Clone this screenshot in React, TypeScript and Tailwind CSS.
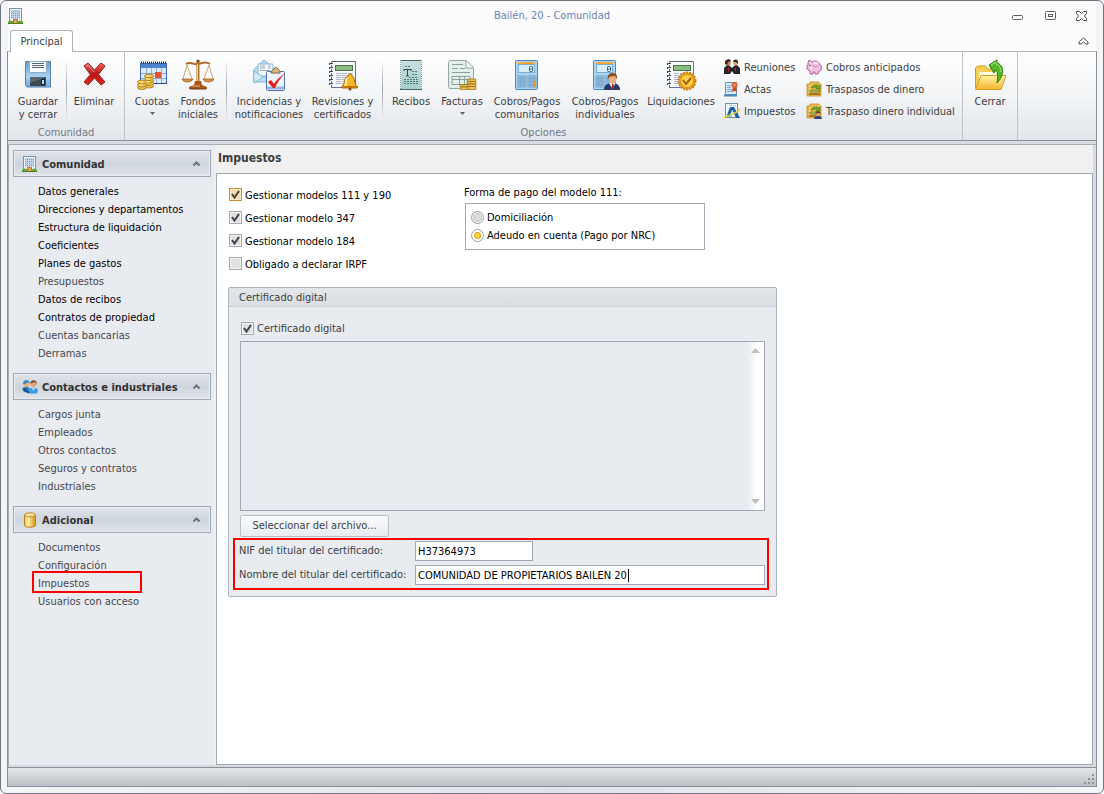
import React, { useState } from 'react';
import { clsx } from 'clsx';

/* ---------- icons ---------- */

const BuildingIcon = () => (
  <svg width="16" height="16" viewBox="0 0 16 16">
    <rect x="1.500" y="0.5" width="12" height="13" fill="#eef5fc" stroke="#7c93ad" />
    <rect x="3" y="2" width="9" height="9" fill="#c3d3e8" />
    <path d="M3 3.500h9M3 5.500h9M3 7.500h9M3 9.500h9" stroke="#7e9ac0" strokeDasharray="1 1" />
    <path d="M5 11h5v4H5z" fill="#c97a2b" />
    <path d="M6.500 12h2v3h-2z" fill="#f3b057" />
    <path d="M0 14c1-2 4-2 5 0v1.500H0zM10 14c1-2 4-2 5 0v1.500h-5z" fill="#6fa62e" />
    <path d="M0 15.500h15" stroke="#4b7d22" />
  </svg>
);

const PeopleIcon = () => (
  <svg width="16" height="16" viewBox="0 0 16 16">
    <circle cx="4.500" cy="5" r="3" fill="#e8ab7c" />
    <path d="M1 5c0-5 6-5 7-1L5 3.500 3 5z" fill="#2f8dcd" />
    <path d="M0 10c2-3 6-3 8 0l-1 4-5-1z" fill="#2778b8" />
    <circle cx="11.500" cy="5" r="3" fill="#e2a274" />
    <path d="M8.500 5c-1-5 7-5 6.500 0l-1.500-2-4 1z" fill="#7a4a2a" />
    <path d="M6 11c3-3 8-3 10 0l-1 3.500H7z" fill="#3b9be0" />
    <path d="M10 9.500l1.500 2 1.500-2" fill="#fff" />
    <path d="M2 10l5 4" stroke="#123d70" strokeWidth="1.500" />
  </svg>
);

const CylinderIcon = () => (
  <svg width="16" height="16" viewBox="0 0 16 16">
    <defs>
      <linearGradient id="gold">
        <stop offset="0" stopColor="#f7c84a" />
        <stop offset=".35" stopColor="#fff0a8" />
        <stop offset="1" stopColor="#d98f10" />
      </linearGradient>
    </defs>
    <path d="M2.500 3v10c0 3 11 3 11 0V3" fill="url(#gold)" stroke="#b47d1d" />
    <ellipse cx="8" cy="2.800" rx="5.500" ry="2" fill="#fbe59a" stroke="#b98b34" />
  </svg>
);

const SaveIcon = () => (
  <svg width="32" height="32" viewBox="0 0 32 32">
    <defs>
      <linearGradient id="disk" x1="0" y1="0" x2="0" y2="1">
        <stop offset="0" stopColor="#6b9fcb" />
        <stop offset=".6" stopColor="#a8d3f3" />
        <stop offset="1" stopColor="#6cabdf" />
      </linearGradient>
    </defs>
    <path d="M3.500 2.500h25v25.500h-23.500l-1.500-2z" fill="url(#disk)" stroke="#5583b0" />
    <rect x="7.500" y="2.500" width="17" height="11" fill="#f8fbff" stroke="#8eaecd" />
    <path d="M10 4.500h12M10 6.500h12M10 8.500h12" stroke="#596676" />
    <path d="M8 18h16v9H8z" fill="#3f4650" />
    <path d="M8 18h16l-16 6z" fill="#5c6772" />
    <rect x="19.500" y="20.500" width="3" height="5" fill="#b8dbf5" stroke="#162334" />
  </svg>
);

const DeleteIcon = () => (
  <svg width="32" height="32" viewBox="0 0 32 32">
    <defs>
      <linearGradient id="red" x1="0" y1="0" x2="0" y2="1">
        <stop offset="0" stopColor="#ee6b64" />
        <stop offset=".5" stopColor="#b81515" />
        <stop offset="1" stopColor="#e02a22" />
      </linearGradient>
    </defs>
    <path
      d="M6 7l4-3 6.500 7L23 4l4 3-6.500 8.500L27 23l-4 3-6.500-7L10 26l-4-3 6.500-7.500z"
      fill="url(#red)" stroke="#a01818" strokeLinejoin="round"
    />
    <path d="M8 7.500l2-1.500 6 7" fill="none" stroke="#f4958d" />
  </svg>
);

const QuotaIcon = () => (
  <svg width="32" height="32" viewBox="0 0 32 32">
    <rect x="4.500" y="4.500" width="26" height="20" fill="#dceafb" stroke="#3b67ad" />
    <path d="M5 5h25v4H5z" fill="#4d84d4" />
    <path d="M5 3.500h26" stroke="#25303d" strokeWidth="2" strokeDasharray="1 1" />
    <path d="M5 14.500h25M5 19.500h25M10.500 9v15M15.500 9v15M20.500 9v15M25.500 9v15" stroke="#89aee0" />
    <path d="M5 24.500h26" stroke="#234d91" />
    <rect x="19" y="13" width="6" height="6" fill="#e4512a" />
    <g fill="#f4c54c" stroke="#9c6b14" strokeWidth=".8">
      <ellipse cx="13" cy="27" rx="4.500" ry="2" /><ellipse cx="13" cy="24.500" rx="4.500" ry="2" />
      <ellipse cx="13" cy="22" rx="4.500" ry="2" /><ellipse cx="13" cy="19.500" rx="4.500" ry="2" />
      <ellipse cx="13" cy="17" rx="4.500" ry="2" />
      <ellipse cx="6" cy="28.500" rx="4.500" ry="2" /><ellipse cx="6" cy="26" rx="4.500" ry="2" />
      <ellipse cx="6" cy="23" rx="4.500" ry="2" />
    </g>
    <path d="M10 17h4M10 20h4M10 23h4M3 23h4M3 26h4" stroke="#fff0a6" />
  </svg>
);

const ScalesIcon = () => (
  <svg width="32" height="32" viewBox="0 0 32 32">
    <path d="M4 5c5-3 7 1 12 0s7-3 12 0" fill="none" stroke="#aa6b2b" strokeWidth="2" />
    <path d="M16 1v23" stroke="#b67326" strokeWidth="3" />
    <circle cx="16" cy="2" r="1.500" fill="#8b4a14" />
    <path d="M15.500 5v18" stroke="#f1c66f" />
    <path d="M5 6L1 20M5 6l5 14M27 6l-5 14M27 6l4 14" stroke="#d3a970" fill="none" />
    <path d="M0 20h11c-1 4-10 4-11 0zM21 20h11c-1 4-10 4-11 0z" fill="#d59442" stroke="#96581c" strokeWidth=".7" />
    <path d="M13 22h6l1 4 5 2v2H7v-2l5-2z" fill="#a9581c" />
    <path d="M8 30h16" stroke="#70380e" />
    <path d="M10 27h8" stroke="#eeb064" />
  </svg>
);

const IncidentsIcon = () => (
  <svg width="32" height="32" viewBox="0 0 32 32">
    <path d="M.5 11L11 1l11 9v13H.5z" fill="#b9dff3" stroke="#7ab3d3" />
    <path d="M5 5h15v12H5z" fill="#f5fbff" stroke="#8abbd3" />
    <path d="M7 7h5M7 9h5M15 7h3M15 9h3M7 11.500h10" stroke="#93a9b5" />
    <path d="M.5 12l10 6L1 24zM22 12l-11 6 11 5z" fill="#cdecf9" stroke="#83b9d5" />
    <rect x="13.500" y="12.500" width="18" height="19" rx="1" fill="#eef3ff" stroke="#5672ad" />
    <path d="M14 29h17" stroke="#99b5e4" strokeWidth="3" />
    <path d="M18 13c0-2 2-1 3-3s3-2 4 0c1 2 2 1 2 3v1h-9z" fill="#d9b978" stroke="#74664c" />
    <path d="M15 23l3-2 3 4c3-5 6-7 11-11-4 5-8 9-10 15h-2z" fill="#e51d17" />
  </svg>
);

const Notebook = () => (
  <g>
    <path d="M4.500 2.500h24v26h-24z" fill="#f9fafc" stroke="#596877" />
    <path d="M28.500 3v25.500h-24" fill="none" stroke="#6670a4" />
    <path d="M9 14.500h17M9 16.500h17M9 18.500h17M9 20.500h17M9 22.500h17M9 24.500h17" stroke="#aeb4cf" strokeDasharray="5 1" />
    <rect x="8.500" y="6.500" width="17" height="5" fill="#8fbd86" stroke="#477443" />
    <path d="M2 5h4M2 9h4M2 13h4M2 17h4M2 21h4M2 25h4" stroke="#424b57" strokeWidth="2" />
    <path d="M3 5.500h3M3 9.500h3M3 13.500h3M3 17.500h3M3 21.500h3M3 25.500h3" stroke="#e8ebee" />
  </g>
);

const ReviewsIcon = () => (
  <svg width="32" height="32" viewBox="0 0 32 32">
    <Notebook />
    <path d="M21 17c0-3 4-3 4 0 4 2 1 8 5 10v2H15v-2c4-2 1-8 6-10z" fill="#f6b72b" stroke="#a66b0b" />
    <path d="M20 19c-2 3 0 6-2 8" stroke="#fff0a0" strokeWidth="2" fill="none" />
    <path d="M15 28h16" stroke="#c5740a" strokeWidth="2" />
    <circle cx="23" cy="30" r="1.500" fill="#80430d" />
  </svg>
);

const LiquidationIcon = () => (
  <svg width="32" height="32" viewBox="0 0 32 32">
    <Notebook />
    <circle cx="22" cy="22" r="8.500" fill="#f0a51f" stroke="#ce7f10" strokeWidth="2" strokeDasharray="2 1" />
    <circle cx="22" cy="22" r="6.500" fill="#ffd345" stroke="#d99017" />
    <path d="M18 21l3 4 5-6" fill="none" stroke="#a15c0b" strokeWidth="2" />
  </svg>
);

const ReceiptIcon = () => (
  <svg width="32" height="32" viewBox="0 0 32 32">
    <defs>
      <linearGradient id="receipt" x1="0" y1="0" x2="0" y2="1">
        <stop offset="0" stopColor="#c9dedd" />
        <stop offset="1" stopColor="#a4cfcc" />
      </linearGradient>
    </defs>
    <rect x="6" y="2" width="20" height="28" fill="url(#receipt)" />
    <path d="M5.500 1v30M26.500 1v30" stroke="#7f9c9b" strokeDasharray="1 1" />
    <path d="M6 1.500h20M5 30.500h22" stroke="#486463" />
    <path d="M9 10.500h7M12.500 11v6M11 17h3M9 10v2M16 10v2" stroke="#284e51" />
    <path d="M10 7.500h6M17 12.500h6M17 15.500h6M9 20.500h14M9 22.500h14M9 24.500h14M14 18.500h9" stroke="#55787a" strokeDasharray="2 1" />
  </svg>
);

const InvoicesIcon = () => (
  <svg width="32" height="32" viewBox="0 0 32 32">
    <path d="M3.500 1.500h17l7 7v21h-24l-1-2v-24z" fill="#e4eeeb" stroke="#93a7a3" />
    <path d="M20 2v7h7" fill="#f5faf8" stroke="#93a7a3" />
    <path d="M6 5.500h11M6 9.500h6M14 9.500h5M6 13.500h18M6 17.500h18v8H6zM6 20.500h18M13.500 17v9M18.500 17v9" stroke="#8ca19c" fill="none" />
    <g fill="#eabf4b" stroke="#8e6518" strokeWidth=".7">
      <rect x="21" y="20" width="9" height="2.500" rx="1" /><rect x="21" y="22.500" width="9" height="2.500" rx="1" />
      <rect x="21" y="25" width="9" height="2.500" rx="1" /><rect x="21" y="27.500" width="9" height="3" rx="1" />
      <rect x="14" y="25.500" width="8" height="2.500" rx="1" /><rect x="14" y="28" width="8" height="2.500" rx="1" />
    </g>
  </svg>
);

const Calculator = () => (
  <g>
    <rect x="4.500" y="1.500" width="22" height="29" rx="1" fill="#a9d4f4" stroke="#4c88bd" />
    <path d="M7 3h17v2H7z" fill="#f6a83a" />
    <rect x="7.500" y="5.500" width="16" height="8" fill="#d9eefb" stroke="#7cadd2" />
    <rect x="18.500" y="7.500" width="3" height="5" rx="1" fill="none" stroke="#33536f" />
    <path d="M19 11l2-2" stroke="#33536f" strokeWidth=".7" />
    <g fill="#f6fbff" stroke="#4f86b5" strokeWidth=".7">
      {[17, 20, 23, 26].map((y) => [7, 10, 13, 17, 20, 23].map((x) => <rect key={`${x}-${y}`} x={x} y={y} width="2" height="2" />))}
    </g>
  </g>
);

const CalculatorIcon = () => (
  <svg width="32" height="32" viewBox="0 0 32 32">
    <Calculator />
    <rect x="22.500" y="22.500" width="2" height="5" fill="#ee981d" stroke="#ee981d" />
  </svg>
);

const CalculatorUserIcon = () => (
  <svg width="32" height="32" viewBox="0 0 32 32">
    <Calculator />
    <path d="M15 31c0-5 3-6 7-7h3c4 1 6 3 6 7z" fill="#263b68" />
    <path d="M20 24l3.500 6 3-6z" fill="#fff" />
    <path d="M23 25h1.500l1 5h-3z" fill="#c42323" />
    <ellipse cx="23.500" cy="20" rx="4" ry="5" fill="#e9b084" />
    <path d="M19 20c-2-8 11-8 9 0l-2-3-5 .5z" fill="#8b4f22" />
  </svg>
);

const CloseFolderIcon = () => (
  <svg width="32" height="32" viewBox="0 0 32 32">
    <defs>
      <linearGradient id="folder" x1="0" y1="0" x2="0" y2="1">
        <stop offset="0" stopColor="#fff2a2" />
        <stop offset="1" stopColor="#f4b62c" />
      </linearGradient>
    </defs>
    <path d="M1.500 29V9l2-2h8l2 3h12v10" fill="#f3cf58" stroke="#d09a24" />
    <path d="M5 13h20v7H5z" fill="#fffbe2" />
    <path d="M1.500 30.500L7 16.500h25l-5 14z" fill="url(#folder)" stroke="#d79c1f" />
    <path d="M15 6l8-5v3c7 2 8 12 0 20 1-7 1-12-2-13l-1 3z" fill="#54b82a" stroke="#267d16" strokeLinejoin="round" />
    <path d="M17 6l5-3v2c4 1 5 5 5 8" fill="none" stroke="#a4e777" />
  </svg>
);

const MeetingIcon = () => (
  <svg width="16" height="16" viewBox="0 0 16 16">
    <path d="M0 15V9l3-3h2l3 3 3-3h2l3 3v6h-6l-2-3-2 3z" fill="#292329" />
    <ellipse cx="4.500" cy="4" rx="2.200" ry="2.800" fill="#c98259" />
    <ellipse cx="11.500" cy="4" rx="2.200" ry="2.800" fill="#dfa277" />
    <path d="M1 5c-1-5 5-6 6-3L4 3 3 6zM9 3c1-4 6-3 5 2l-2-2z" fill="#3a211a" />
    <path d="M4 8l1.500 3L4 13zM12 8l-1.500 3 1.500 2z" fill="#c42b28" />
  </svg>
);

const ActasIcon = () => (
  <svg width="16" height="16" viewBox="0 0 16 16">
    <path d="M1.500 1.500h11v12h-11z" fill="#d9edfb" stroke="#5795c6" />
    <path d="M0 14.500h13" stroke="#4b88bb" strokeWidth="2" />
    <path d="M3 4.500h4M3 6.500h4M3 8.500h5M3 10.500h5" stroke="#77a7ca" />
    <path d="M9 5l-1 6 2.500-1 2.500 1-1-6z" fill="#c84f23" />
    <circle cx="10.500" cy="4" r="3" fill="#df6331" />
    <circle cx="10.500" cy="4" r="1.200" fill="#f4a176" />
  </svg>
);

const TaxIcon = () => (
  <svg width="16" height="16" viewBox="0 0 16 16">
    <rect x="1.500" y=".5" width="12" height="14" fill="#f2faff" stroke="#6994ae" />
    <path d="M3 2.500h9" stroke="#a9c3d2" strokeDasharray="1 1" />
    <path d="M3 12L6 4l3 1-3 7zM7 4h3l6 11h-4z" fill="#1d5fa8" />
    <path d="M0 15c4-4 12-3 16-9" stroke="#e7d634" strokeWidth="1.500" fill="none" />
    <path d="M3 13h5" stroke="#58a26e" />
  </svg>
);

const PigIcon = () => (
  <svg width="16" height="16" viewBox="0 0 16 16">
    <path
      d="M2 4l1-3 3 2c3-2 7-1 8 3l1.500 1-.5 4-2 1-1 3H9v-2H7v2H4v-3L1 10V7l1-1z"
      fill="#f1c3e1" stroke="#b05f9b" strokeLinejoin="round"
    />
    <path d="M8 4h4M4 9h2" stroke="#fff" strokeWidth="1.500" />
    <circle cx="4" cy="6.500" r=".8" fill="#713360" />
    <path d="M7 6c1 3 4 3 5 0" stroke="#c979b1" fill="none" />
  </svg>
);

const TransferIcon = ({ person = false }: { person?: boolean }) => (
  <svg width="16" height="16" viewBox="0 0 16 16">
    <path d="M1 3h3V1h9v2h2v12H1z" fill="#eab644" stroke="#c18a30" strokeWidth=".8" />
    <path d="M3 5h2M3 8h2M3 11h2M6 3h1M9 3h1M12 3h1M12 13h2" stroke="#fff1a5" />
    <path d="M5 7c2-4 6-4 8-2l1-1v4h-4l1-1c-2-1-3-1-6 0z" fill="#6fa82d" stroke="#47741f" strokeWidth=".5" />
    <path d="M4 9h10v2H4z" fill="#a5c95a" stroke="#5e7a24" strokeWidth=".7" />
    <path d="M3 12h11v2H3z" fill="#a8762a" />
    {person && (
      <>
        <path d="M8 16c0-4 8-4 8 0z" fill="#29477a" />
        <circle cx="12" cy="11" r="2.200" fill="#e6a77c" />
        <path d="M9.500 11c0-4 5-4 5 0l-2-1z" fill="#75401d" />
      </>
    )}
  </svg>
);

const Chevron = () => (
  <svg width="7" height="5" viewBox="0 0 7 5">
    <path d="M.5 4.500l3-3 3 3" fill="none" stroke="#6a7078" strokeWidth="2" />
  </svg>
);

/* ---------- ribbon ---------- */

interface RibbonButtonProps {
  icon: React.ReactNode;
  lines: string[];
  width: string;
  menu?: boolean;
}

const RibbonButton: React.FC<RibbonButtonProps> = ({ icon, lines, width, menu }) => (
  <button className={clsx('flex shrink-0 flex-col items-center pt-[7px]', width)}>
    {icon}
    <span className="mt-1 whitespace-nowrap leading-[13px]">
      {lines.map((line) => (
        <span key={line} className="block">{line}</span>
      ))}
    </span>
    {menu && (
      <svg width="5" height="3" viewBox="0 0 5 3" className="mt-1">
        <path d="M0 0h5L2.500 3z" fill="#5c626a" />
      </svg>
    )}
  </button>
);

const SmallButton: React.FC<{ icon: React.ReactNode; label: string }> = ({ icon, label }) => (
  <button className="flex h-[22px] items-center gap-1 whitespace-nowrap">
    {icon}
    <span className="pt-0.5">{label}</span>
  </button>
);

const Separator = () => (
  <span className="mt-2 h-[60px] w-px shrink-0 bg-linear-to-b from-transparent via-[#9da1a8] to-transparent" />
);

const RibbonGroup: React.FC<{ title?: string; className?: string; children: React.ReactNode }> = ({ title, className, children }) => (
  <div className="flex shrink-0 flex-col border-r border-[#bfc3c8]">
    <div className={clsx('flex h-[74px]', className)}>{children}</div>
    <div className="h-[14px] text-center leading-[13px] text-[#727986]">{title}</div>
  </div>
);

/* ---------- sidebar ---------- */

interface NavItem {
  label: string;
  strong?: boolean;
  marked?: boolean;
}

const sections: { title: string; icon: React.ReactNode; items: NavItem[] }[] = [
  {
    title: 'Comunidad',
    icon: <BuildingIcon />,
    items: [
      { label: 'Datos generales', strong: true },
      { label: 'Direcciones y departamentos', strong: true },
      { label: 'Estructura de liquidación', strong: true },
      { label: 'Coeficientes', strong: true },
      { label: 'Planes de gastos', strong: true },
      { label: 'Presupuestos' },
      { label: 'Datos de recibos', strong: true },
      { label: 'Contratos de propiedad', strong: true },
      { label: 'Cuentas bancarias' },
      { label: 'Derramas' },
    ],
  },
  {
    title: 'Contactos e industriales',
    icon: <PeopleIcon />,
    items: [
      { label: 'Cargos junta' },
      { label: 'Empleados' },
      { label: 'Otros contactos' },
      { label: 'Seguros y contratos' },
      { label: 'Industriales' },
    ],
  },
  {
    title: 'Adicional',
    icon: <CylinderIcon />,
    items: [
      { label: 'Documentos' },
      { label: 'Configuración' },
      { label: 'Impuestos', marked: true },
      { label: 'Usuarios con acceso' },
    ],
  },
];

const Sidebar = () => (
  <nav className="flex w-[205px] shrink-0 flex-col gap-[11px] bg-[#e8ebf0] py-[5px] pr-[3px] pl-1">
    {sections.map((section) => (
      <section key={section.title}>
        <button className="flex h-[27px] w-full items-center border border-[#a2a9b3] bg-linear-to-b from-[#e1e5ea] via-[#ced5dd] to-[#e0e4ea] pr-2.5 pl-2 text-left shadow-[inset_0_0_0_1px_#e9ecf0]">
          {section.icon}
          <span className="ml-1 grow pt-[3px] whitespace-nowrap font-bold text-[#333]">{section.title}</span>
          <Chevron />
        </button>
        <ul className="mt-[5px] pl-[25px]">
          {section.items.map((item) => (
            <li key={item.label} className="relative h-[18px] leading-[20px]">
              <a href="#" className={clsx('whitespace-nowrap', item.strong ? 'text-black' : 'text-[#45484d]')}>
                {item.label}
              </a>
              {item.marked && (
                <span className="pointer-events-none absolute -top-[3px] -left-[6px] h-[22px] w-[110px] border-2 border-[#f80000]" />
              )}
            </li>
          ))}
        </ul>
      </section>
    ))}
  </nav>
);

/* ---------- form controls ---------- */

interface CheckProps {
  label: string;
  initial?: boolean;
  hot?: boolean;
  className?: string;
}

const Check: React.FC<CheckProps> = ({ label, initial = false, hot, className }) => {
  const [checked, setChecked] = useState(initial);

  return (
    <label className={clsx('flex items-center gap-[3px] whitespace-nowrap', className)}>
      <span className="grid size-[13px] shrink-0">
        <input
          type="checkbox"
          checked={checked}
          onChange={(e) => setChecked(e.target.checked)}
          className={clsx(
            'col-start-1 row-start-1 size-[13px] appearance-none border',
            hot
              ? 'border-[#d08a2c] bg-[#fbd9a4] shadow-[inset_0_0_0_1px_#fdeccb]'
              : 'border-[#a2a8b4] bg-[#dfe0e2] shadow-[inset_0_0_0_1px_#f5f5f6]'
          )}
        />
        {checked && (
          <svg viewBox="0 0 13 13" className="pointer-events-none col-start-1 row-start-1 size-[13px]">
            <path d="M3 6l2.500 3.500L10 3" fill="none" stroke="#3e4146" strokeWidth="2" />
          </svg>
        )}
      </span>
      <span className="pt-[3px]">{label}</span>
    </label>
  );
};

const paymentOptions = ['Domiciliación', 'Adeudo en cuenta (Pago por NRC)'];

const PaymentMethod = () => {
  const [selected, setSelected] = useState(paymentOptions[1]);

  return (
    <fieldset className="mt-3 w-[241px]">
      <legend className="leading-[14px]">Forma de pago del modelo 111:</legend>
      <div className="mt-[3px] ml-px flex h-[47px] flex-col justify-center border border-[#a2a8b4] pl-[5px]">
        {paymentOptions.map((option) => (
          <label key={option} className="flex h-[18px] items-center gap-[3px] whitespace-nowrap">
            <input
              type="radio"
              name="payment"
              checked={selected === option}
              onChange={() => setSelected(option)}
              className="size-[13px] appearance-none rounded-full border border-[#9aa1ae] bg-[#dcdcdc] shadow-[inset_0_0_0_1px_#fff,inset_0_0_0_2px_#c8c8c8] checked:bg-[radial-gradient(circle,#ffd83c_0_2px,#e79a1c_3px,#fff_4px)] checked:shadow-none"
            />
            <span className="pt-px">{option}</span>
          </label>
        ))}
      </div>
    </fieldset>
  );
};

const Certificate = () => {
  const [nif, setNif] = useState('H37364973');
  const [holder, setHolder] = useState('COMUNIDAD DE PROPIETARIOS BAILEN 20');

  return (
    <section className="mt-3 w-[549px] rounded-[2px] border border-[#adb3bd] bg-[#e8ebf0] pb-[6px] text-[#3b3e43]">
      <h2 className="h-[19px] border-b border-[#cdd1d7] bg-linear-to-b from-[#e2e5e9] to-[#dbdfe4] pl-2.5 leading-[19px]">
        Certificado digital
      </h2>
      <div className="px-[11px] pt-[14px]">
        <Check label="Certificado digital" initial className="h-[14px] pl-px" />
        <div role="listbox" aria-label="Certificados" className="mt-[6px] flex h-[170px] justify-end border border-[#a2a8b4]">
          <div className="flex w-[17px] flex-col items-center justify-between bg-linear-to-r from-[#e8ebf0] to-white to-60% py-[6px]">
            <svg width="9" height="5" viewBox="0 0 9 5"><path d="M0 5L4.500 0 9 5z" fill="#bfbfbf" /></svg>
            <svg width="9" height="5" viewBox="0 0 9 5"><path d="M0 0h9L4.500 5z" fill="#bfbfbf" /></svg>
          </div>
        </div>
        <button className="mt-1 h-[22px] w-[149px] rounded-[2px] border border-[#b7bec6] bg-linear-to-b from-[#f9fafb] to-[#e9ecf0] whitespace-nowrap">
          Seleccionar del archivo...
        </button>
      </div>
      <div className="mx-1 mt-px flex w-[536px] flex-col gap-1 border-2 border-[#f80000] pt-px pr-px pb-[3px] pl-1">
        <div className="flex h-5 items-center">
          <label htmlFor="nif" className="w-[176px] pt-px whitespace-nowrap">NIF del titular del certificado:</label>
          <input
            id="nif"
            value={nif}
            onChange={(e) => setNif(e.target.value)}
            className="h-5 w-[118px] border border-[#a2a8b4] bg-white px-[2px] text-black outline-none"
          />
        </div>
        <div className="relative flex h-5 items-center">
          <label htmlFor="holder" className="w-[176px] pt-px whitespace-nowrap">Nombre del titular del certificado:</label>
          <input
            id="holder"
            value={holder}
            onChange={(e) => setHolder(e.target.value)}
            className="h-5 w-[350px] border border-[#a2a8b4] bg-white px-[2px] text-black outline-none"
          />
          <span className="pointer-events-none absolute left-[389px] h-[13px] w-px bg-black" />
        </div>
      </div>
    </section>
  );
};

/* ---------- window ---------- */

const TitleBar = () => (
  <header className="mx-px bg-[#fcfcfc]">
    <div className="grid h-[29px] grid-cols-3 items-center">
      <div><BuildingIcon /></div>
      <h1 className="pt-0.5 text-center whitespace-nowrap text-[#6a7fb8]">Bailén, 20 - Comunidad</h1>
      <div className="flex items-center justify-end gap-5 pr-2">
        <button aria-label="Minimizar">
          <svg width="12" height="12" viewBox="0 0 12 12">
            <rect x=".5" y="5.500" width="10" height="4" rx="1" fill="#fff" stroke="#555c66" />
          </svg>
        </button>
        <button aria-label="Restaurar">
          <svg width="12" height="12" viewBox="0 0 12 12">
            <rect x="1.500" y="1.500" width="10" height="8" rx="1" fill="#fff" stroke="#555c66" />
            <rect x="4.500" y="4.500" width="4" height="2" fill="none" stroke="#555c66" />
          </svg>
        </button>
        <button aria-label="Cerrar ventana">
          <svg width="12" height="12" viewBox="0 0 12 12">
            <path
              d="M.5 1.500h3l2 2 2-2h3v2L8.500 6l2 2.500v2h-3l-2-2-2 2h-3v-2l2-2.500-2-2.500z"
              fill="#fff" stroke="#454b54"
            />
          </svg>
        </button>
      </div>
    </div>
    <div className="flex h-[21px] items-end justify-between">
      <button className="relative z-10 -mb-px ml-0.5 h-[22px] w-[63px] rounded-t-[3px] border border-b-0 border-[#adb1b8] bg-white pt-0.5 whitespace-nowrap">
        Principal
      </button>
      <button aria-label="Contraer cinta" className="mb-[5px] mr-[7px]">
        <svg width="11" height="10" viewBox="0 0 11 10">
          <path d="M1 6l4.500-4L10 6v2H8L5.500 6 3 8H1z" fill="#fff" stroke="#454b54" />
        </svg>
      </button>
    </div>
  </header>
);

const Ribbon = () => (
  <div className="flex border border-[#8b8f97] border-t-[#adb1b8] bg-linear-to-b from-white via-[#f2f4f6] to-[#e2e5ea]">
    <RibbonGroup title="Comunidad" className="pr-[3px] pl-0.5">
      <RibbonButton icon={<SaveIcon />} lines={['Guardar', 'y cerrar']} width="w-14" />
      <Separator />
      <RibbonButton icon={<DeleteIcon />} lines={['Eliminar']} width="w-[54px]" />
    </RibbonGroup>
    <RibbonGroup title="Opciones" className="pr-[11px] pl-[5px]">
      <RibbonButton icon={<QuotaIcon />} lines={['Cuotas']} width="w-11" menu />
      <RibbonButton icon={<ScalesIcon />} lines={['Fondos', 'iniciales']} width="mr-1 w-12" />
      <Separator />
      <RibbonButton icon={<IncidentsIcon />} lines={['Incidencias y', 'notificaciones']} width="w-[84px]" />
      <RibbonButton icon={<ReviewsIcon />} lines={['Revisiones y', 'certificados']} width="mr-2 w-[63px]" />
      <Separator />
      <RibbonButton icon={<ReceiptIcon />} lines={['Recibos']} width="w-14" />
      <RibbonButton icon={<InvoicesIcon />} lines={['Facturas']} width="w-[46px]" menu />
      <RibbonButton icon={<CalculatorIcon />} lines={['Cobros/Pagos', 'comunitarios']} width="w-[84px]" />
      <RibbonButton icon={<CalculatorUserIcon />} lines={['Cobros/Pagos', 'individuales']} width="w-[72px]" />
      <RibbonButton icon={<LiquidationIcon />} lines={['Liquidaciones']} width="w-20" />
      <div className="mt-1 ml-[3px] w-[82px]">
        <SmallButton icon={<MeetingIcon />} label="Reuniones" />
        <SmallButton icon={<ActasIcon />} label="Actas" />
        <SmallButton icon={<TaxIcon />} label="Impuestos" />
      </div>
      <div className="mt-1 w-[145px]">
        <SmallButton icon={<PigIcon />} label="Cobros anticipados" />
        <SmallButton icon={<TransferIcon />} label="Traspasos de dinero" />
        <SmallButton icon={<TransferIcon person />} label="Traspaso dinero individual" />
      </div>
    </RibbonGroup>
    <RibbonGroup>
      <RibbonButton icon={<CloseFolderIcon />} lines={['Cerrar']} width="w-[54px]" />
    </RibbonGroup>
  </div>
);

const App: React.FC = () => (
  <div className="flex min-h-screen flex-col rounded-[6px] border border-[#70757f] bg-linear-to-r from-[#f4f5f7] via-[#dfe2e7] to-[#f4f5f7] px-1.5 pb-1.5 font-['DejaVu_Sans_Condensed','DejaVu_Sans',sans-serif] text-[11px] text-[#3b3e43]">
    <TitleBar />
    <Ribbon />
    <div className="flex grow flex-col border-x border-[#8b8f97] bg-[#d8dce2] pt-[3px]">
      <div className="flex grow border-t border-l border-[#a9adb5] bg-[#d8dce2] pr-[3px] pb-0.5">
        <Sidebar />
        <main className="flex grow flex-col bg-[#f0f0f0]">
          <h2 className="h-7 pl-1 text-[12px] leading-[26px] font-bold">Impuestos</h2>
          <div className="ml-0.5 grow border border-[#a2a8b4] bg-white pl-[11px] text-black">
            <div className="flex">
              <div className="w-[236px] pt-[9px] pl-px">
                <Check label="Gestionar modelos 111 y 190" initial hot className="h-[23px]" />
                <Check label="Gestionar modelo 347" initial className="h-[23px]" />
                <Check label="Gestionar modelo 184" initial className="h-[23px]" />
                <Check label="Obligado a declarar IRPF" className="h-[23px]" />
              </div>
              <PaymentMethod />
            </div>
            <Certificate />
          </div>
        </main>
      </div>
    </div>
    <footer className="flex h-5 items-end justify-end border border-[#8b8f97] bg-linear-to-b from-[#e4e7eb] to-[#bcc0c6] p-px">
      <svg width="11" height="11" viewBox="0 0 11 11">
        <path d="M8 0h2v2H8zM4 4h2v2H4zM8 4h2v2H8zM0 8h2v2H0zM4 8h2v2H4zM8 8h2v2H8z" fill="#8b9098" />
      </svg>
    </footer>
  </div>
);

export default App;
